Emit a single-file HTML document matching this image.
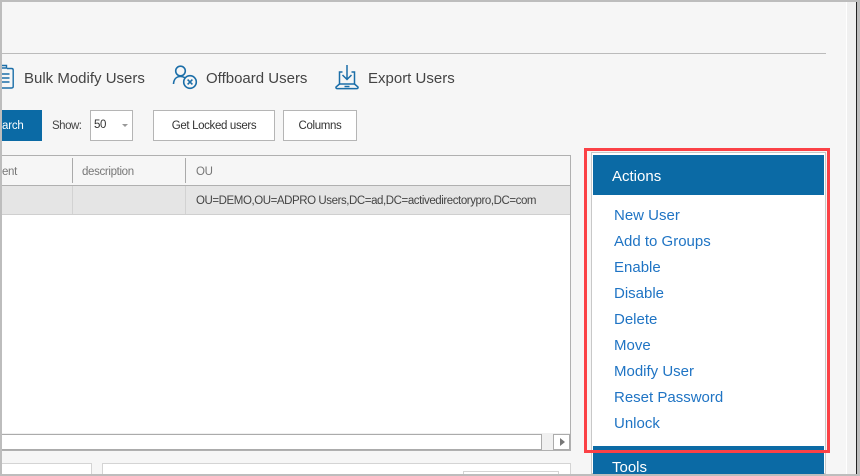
<!DOCTYPE html>
<html style="width:860px;height:476px;overflow:hidden"><head><meta charset="utf-8"><style>
html,body{margin:0;padding:0}
body{width:860px;height:476px;position:relative;overflow:hidden;background:#f6f6f6;font-family:"Liberation Sans",sans-serif}
div,a{position:absolute;box-sizing:border-box;white-space:nowrap}
svg{position:absolute}
.t{font-size:15px;color:#444;line-height:20px;top:69px}
.b{background:#fff;border:1px solid #b5b5b5;top:110px;height:31px;font-size:11.5px;letter-spacing:-.35px;color:#333;text-align:center;line-height:31px}
.h{font-size:11.5px;letter-spacing:-.35px;color:#777;top:165px;line-height:14px}
.l{left:614px;font-size:15px;color:#1f74c4;line-height:18px}
</style></head><body>
<div style="left:846px;top:0;width:1px;height:476px;background:#fff"></div>
<div style="left:847px;top:0;width:9px;height:476px;background:#f0f0f0"></div>
<div style="left:856px;top:0;width:1px;height:476px;background:#222"></div>
<div style="left:857px;top:0;width:3px;height:476px;background:#bdbdbd"></div>
<div style="left:0;top:0;width:860px;height:2px;background:#bdbdbd"></div>
<div style="left:0;top:0;width:2px;height:476px;background:#bdbdbd"></div>
<div style="left:2px;top:53px;width:824px;height:1px;background:#bbb"></div>

<svg style="left:2px;top:64px" width="12" height="26" viewBox="0 0 12 26" fill="none" stroke="#1b6ea8" stroke-width="1.4"><path d="M-4 4H4.5V1.5H-2"/><path d="M5 4.5H9.5Q11.2 4.5 11.2 6V22.5Q11.2 24 9.5 24H-4"/><path d="M0 10H7.5M0 14H7.5M0 18H7.5"/></svg>
<div class="t" style="left:24px">Bulk Modify Users</div>
<svg style="left:172px;top:64px" width="26" height="26" viewBox="0 0 26 26" fill="none" stroke="#1b6ea8" stroke-width="1.6"><circle cx="8.5" cy="7" r="4.8"/><path d="M1.5 20C1.8 15 4.5 12.5 8.5 12.5C10.2 12.5 11.6 12.9 12.8 13.7"/><circle cx="18" cy="18" r="6.3"/><path d="M15.6 15.6L20.4 20.4M20.4 15.6L15.6 20.4"/></svg>
<div class="t" style="left:206px">Offboard Users</div>
<svg style="left:335px;top:64px" width="26" height="27" viewBox="0 0 26 27" fill="none" stroke="#1b6ea8" stroke-width="1.5"><path d="M12 1V15M7.5 11L12 15.5L16.5 11"/><path d="M7.5 8H4.5V20H19.5V8H16.5"/><path d="M4.5 20L1 23Q0.6 24.6 2.5 24.6H21.5Q23.4 24.6 23 23L19.5 20M9.5 22.5H14.5"/></svg>
<div class="t" style="left:368px">Export Users</div>

<div style="left:2px;top:110px;width:40px;height:31px;background:#0b6aa5;color:#fff;font-size:11.5px;letter-spacing:-.2px;line-height:33px">arch</div>
<div style="left:52px;top:119px;font-size:11.5px;letter-spacing:-.5px;line-height:14px;color:#444">Show:</div>
<div class="b" style="left:90px;width:43px;text-align:left;padding-left:3px;line-height:29px">50</div>
<div style="left:122px;top:124px;width:0;height:0;border:3px solid transparent;border-top:3px solid #999;border-bottom:0"></div>
<div class="b" style="left:153px;width:122px">Get Locked users</div>
<div class="b" style="left:283px;width:74px">Columns</div>

<div style="left:2px;top:155px;width:569px;height:296px;background:#fff;border:1px solid #b0b0b0;border-left:0"></div>
<div style="left:2px;top:156px;width:568px;height:29px;background:#f6f6f6"></div>
<div style="left:2px;top:185px;width:568px;height:1px;background:#b0b0b0"></div>
<div style="left:2px;top:186px;width:568px;height:28px;background:#e5e5e5"></div>
<div style="left:2px;top:214px;width:568px;height:1px;background:#cfcfcf"></div>
<div style="left:72px;top:158px;width:1px;height:25px;background:#aaa"></div>
<div style="left:185px;top:158px;width:1px;height:25px;background:#aaa"></div>
<div style="left:72px;top:186px;width:1px;height:28px;background:#d2d2d2"></div>
<div style="left:185px;top:186px;width:1px;height:28px;background:#d2d2d2"></div>
<div class="h" style="left:2px">ent</div>
<div class="h" style="left:82px">description</div>
<div class="h" style="left:196px">OU</div>
<div style="left:196px;top:194px;font-size:11.5px;letter-spacing:-.43px;line-height:14px;color:#444">OU=DEMO,OU=ADPRO Users,DC=ad,DC=activedirectorypro,DC=com</div>

<div style="left:2px;top:433px;width:568px;height:17px;background:#f0f0f0"></div>
<div style="left:2px;top:434px;width:540px;height:16px;background:#fff;border:1px solid #ababab;border-left:0"></div>
<div style="left:553px;top:434px;width:17px;height:16px;background:#fff;border:1px solid #ababab"></div>
<div style="left:560px;top:438px;width:0;height:0;border:4px solid transparent;border-left:5px solid #777;border-right:0"></div>

<div style="left:2px;top:463px;width:90px;height:13px;background:#fff;border:1px solid #d4d4d4;border-left:0"></div>
<div style="left:102px;top:463px;width:469px;height:13px;background:#fff;border:1px solid #d4d4d4"></div>
<div style="left:463px;top:471px;width:96px;height:5px;border:1px solid #d4d4d4"></div>

<div style="left:591px;top:152px;width:235px;height:322px;background:#fff;border:1px solid #c8c8c8"></div>
<div style="left:593px;top:155px;width:231px;height:40px;background:#0b6aa5;color:#fff;font-size:15px;line-height:43px;padding-left:19px">Actions</div>
<div class="l" style="top:207px">New User</div>
<div class="l" style="top:233px">Add to Groups</div>
<div class="l" style="top:259px">Enable</div>
<div class="l" style="top:285px">Disable</div>
<div class="l" style="top:311px">Delete</div>
<div class="l" style="top:337px">Move</div>
<div class="l" style="top:363px">Modify User</div>
<div class="l" style="top:389px">Reset Password</div>
<div class="l" style="top:415px">Unlock</div>
<div style="left:593px;top:446px;width:231px;height:28px;background:#0b6aa5;color:#fff;font-size:15px;line-height:43px;padding-left:19px;overflow:hidden">Tools</div>
<div style="left:584px;top:148px;width:246px;height:305px;border:3px solid #fb4146"></div>
<div style="left:0;top:474px;width:860px;height:2px;background:#bdbdbd"></div>
</body></html>
